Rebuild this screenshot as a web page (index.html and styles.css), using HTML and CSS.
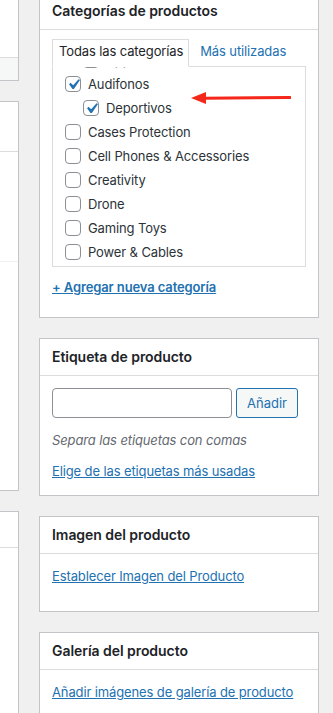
FILE: index.html
```html
<!DOCTYPE html>
<html lang="es">
<head>
<meta charset="utf-8">
<title>Producto</title>
<link rel="stylesheet" href="styles.css">
</head>
<body>
<div class="page">
  <div class="col-left">
    <div class="lbox lbox-a">
      <div class="lbox-a-body"></div>
      <div class="lbox-a-foot"></div>
    </div>
    <div class="lbox lbox-b">
      <div class="lbox-b-head"></div>
      <div class="lbox-b-sec"></div>
      <div class="lbox-b-rest"></div>
    </div>
    <div class="lbox lbox-c">
      <div class="lbox-c-head"></div>
      <div class="lbox-c-rest"></div>
    </div>
  </div>

  <div class="col-right">
    <div class="postbox postbox-cat">
      <h2 class="postbox-title">Categorías de productos</h2>
      <div class="inside inside-cat">
        <ul class="tabs">
          <li class="tab tab-active">Todas las categorías</li>
          <li class="tab"><a href="#" class="tab-link">Más utilizadas</a></li>
        </ul>
        <div class="catbox">
          <ul class="checklist">
            <li>
              <ul class="children">
                <li class="item"><span class="cb"></span><span class="lbl">Apple</span></li>
              </ul>
            </li>
            <li class="item"><span class="cb cb-on"><svg class="check" viewBox="0 0 20 20" width="21" height="21"><path d="M14.83 4.89l1.34.94-5.81 8.38H9.02L5.78 9.67l1.34-1.25 2.57 2.4z"/></svg></span><span class="lbl">Audifonos</span></li>
            <li>
              <ul class="children">
                <li class="item"><span class="cb cb-on"><svg class="check" viewBox="0 0 20 20" width="21" height="21"><path d="M14.83 4.89l1.34.94-5.81 8.38H9.02L5.78 9.67l1.34-1.25 2.57 2.4z"/></svg></span><span class="lbl">Deportivos</span></li>
              </ul>
            </li>
            <li class="item"><span class="cb"></span><span class="lbl">Cases Protection</span></li>
            <li class="item"><span class="cb"></span><span class="lbl">Cell Phones &amp; Accessories</span></li>
            <li class="item"><span class="cb"></span><span class="lbl">Creativity</span></li>
            <li class="item"><span class="cb"></span><span class="lbl">Drone</span></li>
            <li class="item"><span class="cb"></span><span class="lbl">Gaming Toys</span></li>
            <li class="item"><span class="cb"></span><span class="lbl">Power &amp; Cables</span></li>
          </ul>
        </div>
        <p class="add-cat"><a href="#" class="link link-bold">+ Agregar nueva categoría</a></p>
      </div>
      <svg class="arrow" width="100" height="16" viewBox="0 0 100 16">
        <polygon points="0,8 15,2 15,14" fill="#f5271a"/>
        <path d="M13 8.3 L99 7.4" stroke="#f5271a" stroke-width="3" stroke-linecap="round"/>
      </svg>
    </div>

    <div class="postbox">
      <h2 class="postbox-title">Etiqueta de producto</h2>
      <div class="inside inside-tag">
        <div class="tag-row">
          <input class="tag-input" type="text" aria-label="Etiqueta">
          <button class="btn" type="button">Añadir</button>
        </div>
        <p class="howto">Separa las etiquetas con comas</p>
        <p class="tag-cloud"><a href="#" class="link">Elige de las etiquetas más usadas</a></p>
      </div>
    </div>

    <div class="postbox">
      <h2 class="postbox-title">Imagen del producto</h2>
      <div class="inside inside-img">
        <p class="single-link"><a href="#" class="link">Establecer Imagen del Producto</a></p>
      </div>
    </div>

    <div class="postbox">
      <h2 class="postbox-title">Galería del producto</h2>
      <div class="inside inside-img">
        <p class="single-link"><a href="#" class="link">Añadir imágenes de galería de producto</a></p>
      </div>
    </div>
  </div>
</div>
</body>
</html>
```

FILE: styles.css
```css
html, body {
  margin: 0;
  padding: 0;
}
body {
  background: #f0f0f1;
  font-family: Inter, "Liberation Sans", sans-serif;
  font-size: 13px;
  letter-spacing: -0.12px;
  color: #3c434a;
  overflow: hidden;
  height: 713px;
}
.page {
  display: flex;
  gap: 20px;
  align-items: flex-start;
}

/* left column (cut off) */
.col-left {
  width: 19px;
  flex: none;
  display: flex;
  flex-direction: column;
  gap: 20px;
}
.lbox {
  background: #fff;
  border: 1px solid #c3c4c7;
  border-left: none;
}
.lbox-a {
  border-top: none;
}
.lbox-a-body {
  height: 57px;
}
.lbox-a-foot {
  height: 22px;
  background: #f6f7f7;
  border-top: 1px solid #dcdcde;
}
.lbox-b-head {
  height: 49px;
  border-bottom: 1px solid #dcdcde;
}
.lbox-b-sec {
  height: 109px;
  border-bottom: 1px solid #f0f0f1;
}
.lbox-b-rest {
  height: 228px;
}
.lbox-c {
  border-bottom: none;
}
.lbox-c-head {
  height: 35px;
  border-bottom: 1px solid #dcdcde;
}
.lbox-c-rest {
  height: 200px;
}

/* right column */
.col-right {
  width: 280px;
  flex: none;
  margin-top: -8px;
  display: flex;
  flex-direction: column;
  gap: 20px;
}
.postbox {
  position: relative;
  background: #fff;
  border: 1px solid #c3c4c7;
}
.postbox-title {
  margin: 0;
  padding: 8px 12px;
  font-size: 14px;
  font-weight: 600;
  line-height: 20px;
  letter-spacing: -0.05px;
  color: #1d2327;
  border-bottom: 1px solid #dcdcde;
}
.inside {
  padding: 0 12px;
}
.inside-cat {
  padding-top: 9px;
  padding-bottom: 20px;
}
.tabs {
  list-style: none;
  margin: 0;
  padding: 0;
  display: flex;
  position: relative;
  z-index: 1;
}
.tab {
  padding: 2px 5px 5px 6px;
  line-height: 19px;
  border: 1px solid transparent;
  margin-bottom: -1px;
  margin-right: 4px;
}
.tab-active {
  border-color: #dcdcde;
  border-bottom-color: #fff;
  background: #fff;
  color: #1d2327;
}
.tab-link {
  color: #2271b1;
  text-decoration: none;
}
.catbox {
  border: 1px solid #dcdcde;
  height: 199px;
  overflow: hidden;
  background: #fff;
}
.checklist, .children {
  list-style: none;
  margin: 0;
  padding: 0;
}
.checklist {
  margin-top: -19px;
  padding-left: 12px;
}
.children {
  margin-left: 18px;
}
.item {
  height: 24px;
  display: flex;
  align-items: center;
  gap: 7px;
  color: #2c3338;
  line-height: 19px;
}
.cb {
  width: 14px;
  height: 14px;
  border: 1px solid #8c8f94;
  border-radius: 4px;
  background: #fff;
  flex: none;
  display: flex;
  align-items: center;
  justify-content: center;
}
.check {
  flex: none;
  fill: #2271b1;
}
.add-cat {
  margin: 11px 0 0;
  line-height: 19px;
}
.link {
  color: #2271b1;
  text-decoration: underline;
}
.link-bold {
  font-weight: 600;
}
.arrow {
  position: absolute;
  left: 151px;
  top: 97px;
}

.inside-tag {
  padding-top: 12px;
  padding-bottom: 14px;
}
.tag-row {
  display: flex;
  gap: 4px;
}
.tag-input {
  box-sizing: border-box;
  width: 180px;
  height: 30px;
  margin: 0;
  border: 1px solid #8c8f94;
  border-radius: 4px;
  background: #fff;
  padding: 0 8px;
  font: inherit;
}
.btn {
  box-sizing: border-box;
  width: 62px;
  height: 30px;
  margin: 0;
  padding: 0;
  border: 1px solid #2271b1;
  border-radius: 3px;
  background: #f6f7f7;
  color: #2271b1;
  font: inherit;
  font-size: 13px;
}
.howto {
  margin: 13px 0 0;
  line-height: 19px;
  font-style: italic;
  color: #646970;
}
.tag-cloud {
  margin: 12px 0 0;
  line-height: 19px;
}
.inside-img {
  padding-top: 13px;
  padding-bottom: 25px;
}
.single-link {
  margin: 0;
  line-height: 19px;
}
```
